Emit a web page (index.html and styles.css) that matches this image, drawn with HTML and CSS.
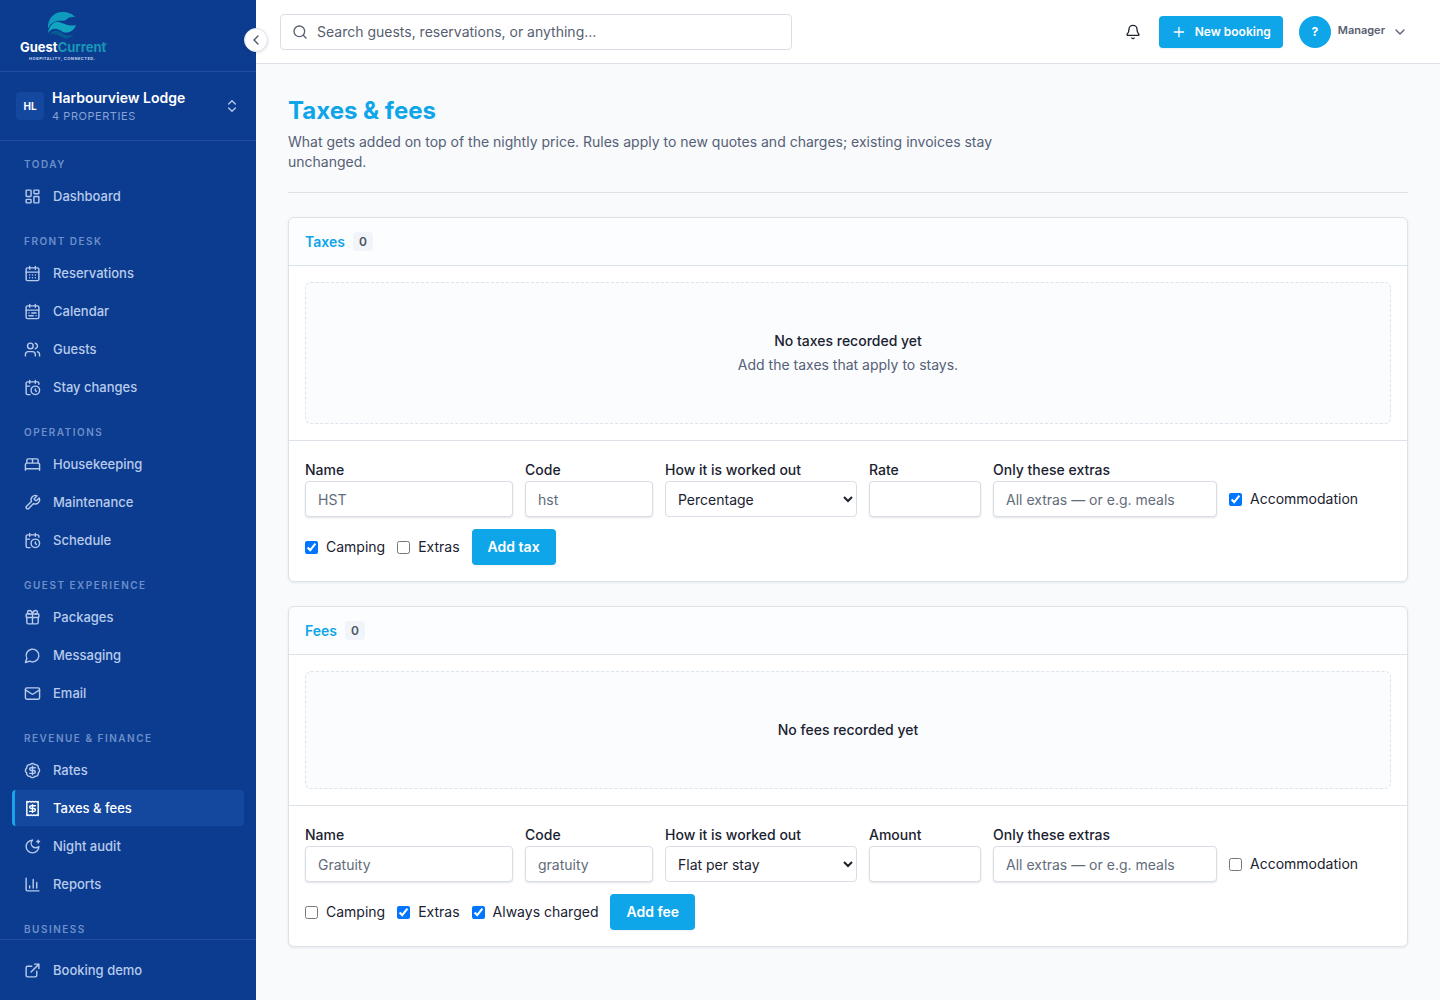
FILE: index.html
```html
<!DOCTYPE html>
<html lang="en">
<head>
<meta charset="utf-8">
<meta name="viewport" content="width=device-width, initial-scale=1">
<title>Taxes &amp; fees · GuestCurrent</title>
<link rel="stylesheet" href="styles.css">
</head>
<body>
<div class="app">
  <aside class="sidebar">
    <a class="brand" href="#" aria-label="GuestCurrent home">
      <svg class="brand-logo" width="96" height="52" viewBox="0 0 96 52">
        <path fill="#0e9bbd" d="M30 19C29 9 36 2 44 2C50 2 55 4 57 7C54 7 51 7 49 9C46 12 42 10 39 11C35 12 32 14 30 19Z"/>
        <path fill="#12a5c0" d="M30 23C31 16 36 11 41 12C46 13 50 17 58 15C56 21 50 24 45 22C40 19 35 16 30 23Z"/>
        <path fill="#0a5a94" d="M32 25C35 19 40 20 44 23C48 26 52 26 56 24C51 30 46 29 42 26C38 24 35 23 32 25Z"/>
        <text class="logo-word" x="2" y="42" fill="#fff">Guest<tspan fill="#1797b5">Current</tspan></text>
        <text class="logo-tm" x="87" y="36">™</text>
        <text class="logo-tag" x="11" y="50">HOSPITALITY, CONNECTED.</text>
      </svg>
    </a>
    <button class="property" type="button">
      <span class="property-badge">HL</span>
      <span class="property-text"><span class="property-name">Harbourview Lodge</span><span class="property-count">4 PROPERTIES</span></span>
      <svg class="icon" width="16" height="16" viewBox="0 0 24 24"><path d="m7 15 5 5 5-5M7 9l5-5 5 5"/></svg>
    </button>
    <nav class="nav" aria-label="Main">
      <section class="nav-group">
        <h2 class="nav-title">TODAY</h2>
        <a class="nav-link" href="#"><svg class="icon" width="17" height="17" viewBox="0 0 24 24"><rect width="7" height="9" x="3" y="3" rx="1"/><rect width="7" height="5" x="14" y="3" rx="1"/><rect width="7" height="9" x="14" y="12" rx="1"/><rect width="7" height="5" x="3" y="16" rx="1"/></svg>Dashboard</a>
      </section>
      <section class="nav-group">
        <h2 class="nav-title">FRONT DESK</h2>
        <a class="nav-link" href="#"><svg class="icon" width="17" height="17" viewBox="0 0 24 24"><path d="M8 2v4M16 2v4M3 10h18M8 14h.01M12 14h.01M16 14h.01M8 18h.01M12 18h.01M16 18h.01"/><rect width="18" height="18" x="3" y="4" rx="2"/></svg>Reservations</a>
        <a class="nav-link" href="#"><svg class="icon" width="17" height="17" viewBox="0 0 24 24"><rect width="18" height="18" x="3" y="4" rx="2"/><path d="M16 2v4M3 10h18M8 2v4M17 14h-6M13 18H7M7 14h.01M17 18h.01"/></svg>Calendar</a>
        <a class="nav-link" href="#"><svg class="icon" width="17" height="17" viewBox="0 0 24 24"><path d="M16 21v-2a4 4 0 0 0-4-4H6a4 4 0 0 0-4 4v2"/><circle cx="9" cy="7" r="4"/><path d="M22 21v-2a4 4 0 0 0-3-3.870M16 3.130a4 4 0 0 1 0 7.750"/></svg>Guests</a>
        <a class="nav-link" href="#"><svg class="icon" width="17" height="17" viewBox="0 0 24 24"><path d="M21 7.500V6a2 2 0 0 0-2-2H5a2 2 0 0 0-2 2v14a2 2 0 0 0 2 2h3.500M16 2v4M8 2v4M3 10h5M17.500 17.500 16 16.300V14"/><circle cx="16" cy="16" r="6"/></svg>Stay changes</a>
      </section>
      <section class="nav-group">
        <h2 class="nav-title">OPERATIONS</h2>
        <a class="nav-link" href="#"><svg class="icon" width="17" height="17" viewBox="0 0 24 24"><path d="M2 20v-8a2 2 0 0 1 2-2h16a2 2 0 0 1 2 2v8M4 10V6a2 2 0 0 1 2-2h12a2 2 0 0 1 2 2v4M12 4v6M2 18h20"/></svg>Housekeeping</a>
        <a class="nav-link" href="#"><svg class="icon" width="17" height="17" viewBox="0 0 24 24"><path d="M14.700 6.300a1 1 0 0 0 0 1.400l1.600 1.600a1 1 0 0 0 1.400 0l3.770-3.770a6 6 0 0 1-7.940 7.940l-6.910 6.910a2.120 2.120 0 0 1-3-3l6.910-6.910a6 6 0 0 1 7.940-7.940l-3.760 3.760z"/></svg>Maintenance</a>
        <a class="nav-link" href="#"><svg class="icon" width="17" height="17" viewBox="0 0 24 24"><path d="M21 7.500V6a2 2 0 0 0-2-2H5a2 2 0 0 0-2 2v14a2 2 0 0 0 2 2h3.500M16 2v4M8 2v4M3 10h5M17.500 17.500 16 16.300V14"/><circle cx="16" cy="16" r="6"/></svg>Schedule</a>
      </section>
      <section class="nav-group">
        <h2 class="nav-title">GUEST EXPERIENCE</h2>
        <a class="nav-link" href="#"><svg class="icon" width="17" height="17" viewBox="0 0 24 24"><rect x="3" y="7" width="18" height="5" rx="1"/><path d="M12 7v14M20 12v7a2 2 0 0 1-2 2H6a2 2 0 0 1-2-2v-7M7.500 7a2.500 2.500 0 0 1 0-5C10 2 11.500 4 12 7c.5-3 2-5 4.500-5a2.500 2.500 0 0 1 0 5"/></svg>Packages</a>
        <a class="nav-link" href="#"><svg class="icon" width="17" height="17" viewBox="0 0 24 24"><path d="M7.900 20A9 9 0 1 0 4 16.100L2 22Z"/></svg>Messaging</a>
        <a class="nav-link" href="#"><svg class="icon" width="17" height="17" viewBox="0 0 24 24"><rect width="20" height="16" x="2" y="4" rx="2"/><path d="m22 7-8.970 5.700a1.940 1.940 0 0 1-2.060 0L2 7"/></svg>Email</a>
      </section>
      <section class="nav-group">
        <h2 class="nav-title">REVENUE &amp; FINANCE</h2>
        <a class="nav-link" href="#"><svg class="icon" width="17" height="17" viewBox="0 0 24 24"><path d="M3.850 8.620a4 4 0 0 1 4.780-4.770 4 4 0 0 1 6.740 0 4 4 0 0 1 4.780 4.780 4 4 0 0 1 0 6.740 4 4 0 0 1-4.770 4.780 4 4 0 0 1-6.750 0 4 4 0 0 1-4.780-4.770 4 4 0 0 1 0-6.760Z"/><path d="M16 8h-6a2 2 0 1 0 0 4h4a2 2 0 1 1 0 4H8M12 18V6"/></svg>Rates</a>
        <a class="nav-link is-active" href="#" aria-current="page"><svg class="icon" width="17" height="17" viewBox="0 0 24 24"><path d="M4 2v20l2-1 2 1 2-1 2 1 2-1 2 1 2-1 2 1V2l-2 1-2-1-2 1-2-1-2 1-2-1-2 1Z"/><path d="M16 8h-6a2 2 0 1 0 0 4h4a2 2 0 1 1 0 4H8M12 17.500v-11"/></svg>Taxes &amp; fees</a>
        <a class="nav-link" href="#"><svg class="icon" width="17" height="17" viewBox="0 0 24 24"><path d="M12 3a6 6 0 0 0 9 9 9 9 0 1 1-9-9M20 3v4M22 5h-4"/></svg>Night audit</a>
        <a class="nav-link" href="#"><svg class="icon" width="17" height="17" viewBox="0 0 24 24"><path d="M3 3v16a2 2 0 0 0 2 2h16M18 17V9M13 17V5M8 17v-3"/></svg>Reports</a>
      </section>
      <section class="nav-group">
        <h2 class="nav-title">BUSINESS</h2>
      </section>
    </nav>
    <div class="sidebar-foot">
      <a class="nav-link" href="#"><svg class="icon" width="17" height="17" viewBox="0 0 24 24"><path d="M15 3h6v6M10 14 21 3M18 13v6a2 2 0 0 1-2 2H5a2 2 0 0 1-2-2V8a2 2 0 0 1 2-2h6"/></svg>Booking demo</a>
    </div>
    <button class="collapse" type="button" aria-label="Collapse sidebar"><svg class="icon" width="16" height="16" viewBox="0 0 24 24"><path d="m15 18-6-6 6-6"/></svg></button>
  </aside>

  <div class="page">
    <header class="topbar">
      <label class="search">
        <svg class="icon" width="16" height="16" viewBox="0 0 24 24"><circle cx="11" cy="11" r="8"/><path d="m21 21-4.300-4.300"/></svg>
        <input class="search-input" type="search" placeholder="Search guests, reservations, or anything..." aria-label="Search">
      </label>
      <div class="topbar-actions">
        <button class="bell" type="button" aria-label="Notifications"><svg class="icon" width="16" height="16" viewBox="0 0 24 24"><path d="M10.270 21a2 2 0 0 0 3.460 0M3.260 15.330A1 1 0 0 0 4 17h16a1 1 0 0 0 .740-1.670C19.410 13.960 18 12.500 18 8A6 6 0 0 0 6 8c0 4.500-1.410 5.960-2.740 7.330"/></svg></button>
        <button class="btn btn-small" type="button"><svg class="icon" width="16" height="16" viewBox="0 0 24 24"><path d="M5 12h14M12 5v14"/></svg>New booking</button>
        <button class="user" type="button"><span class="avatar">?</span><span class="user-role">Manager</span><svg class="icon" width="16" height="16" viewBox="0 0 24 24"><path d="m6 9 6 6 6-6"/></svg></button>
      </div>
    </header>

    <main class="content">
      <header class="page-head">
        <h1 class="page-title">Taxes &amp; fees</h1>
        <p class="page-intro">What gets added on top of the nightly price. Rules apply to new quotes and charges; existing invoices stay unchanged.</p>
      </header>

      <section class="card">
        <header class="card-head"><h2 class="card-title">Taxes</h2><span class="count">0</span></header>
        <div class="card-body">
          <div class="empty"><p class="empty-title">No taxes recorded yet</p><p class="empty-text">Add the taxes that apply to stays.</p></div>
        </div>
        <form class="rule-form">
          <label class="field field-name"><span class="field-label">Name</span><input class="control" type="text" placeholder="HST"></label>
          <label class="field field-code"><span class="field-label">Code</span><input class="control" type="text" placeholder="hst"></label>
          <label class="field field-method"><span class="field-label">How it is worked out</span><select class="control select"><option>Percentage</option><option>Flat per stay</option></select></label>
          <label class="field field-amount"><span class="field-label">Rate</span><input class="control" type="text"></label>
          <label class="field field-extras"><span class="field-label">Only these extras</span><input class="control" type="text" placeholder="All extras — or e.g. meals"></label>
          <label class="check"><input class="check-box" type="checkbox" checked>Accommodation</label>
          <label class="check"><input class="check-box" type="checkbox" checked>Camping</label>
          <label class="check"><input class="check-box" type="checkbox">Extras</label>
          <button class="btn" type="button">Add tax</button>
        </form>
      </section>

      <section class="card">
        <header class="card-head"><h2 class="card-title">Fees</h2><span class="count">0</span></header>
        <div class="card-body">
          <div class="empty"><p class="empty-title">No fees recorded yet</p></div>
        </div>
        <form class="rule-form">
          <label class="field field-name"><span class="field-label">Name</span><input class="control" type="text" placeholder="Gratuity"></label>
          <label class="field field-code"><span class="field-label">Code</span><input class="control" type="text" placeholder="gratuity"></label>
          <label class="field field-method"><span class="field-label">How it is worked out</span><select class="control select"><option>Flat per stay</option><option>Percentage</option></select></label>
          <label class="field field-amount"><span class="field-label">Amount</span><input class="control" type="text"></label>
          <label class="field field-extras"><span class="field-label">Only these extras</span><input class="control" type="text" placeholder="All extras — or e.g. meals"></label>
          <label class="check"><input class="check-box" type="checkbox">Accommodation</label>
          <label class="check"><input class="check-box" type="checkbox">Camping</label>
          <label class="check"><input class="check-box" type="checkbox" checked>Extras</label>
          <label class="check"><input class="check-box" type="checkbox" checked>Always charged</label>
          <button class="btn" type="button">Add fee</button>
        </form>
      </section>
    </main>
  </div>
</div>
</body>
</html>
```
FILE: styles.css
```css
*, *::before, *::after { box-sizing: border-box; }

body {
  margin: 0;
  background: #f8fafc;
  color: #1a2230;
  font-family: Inter, "Liberation Sans", sans-serif;
  font-size: 14px;
  line-height: 20px;
}

h1, h2, p { margin: 0; }
button, input, select { font: inherit; color: inherit; }
button { border: 0; background: none; padding: 0; cursor: pointer; }
a { color: inherit; text-decoration: none; }

.icon {
  flex: none;
  fill: none;
  stroke: currentColor;
  stroke-width: 2;
  stroke-linecap: round;
  stroke-linejoin: round;
}

.app { display: flex; min-height: 100vh; }

/* Sidebar */
.sidebar {
  position: sticky;
  top: 0;
  z-index: 1;
  display: flex;
  flex-direction: column;
  flex: none;
  width: 256px;
  height: 100vh;
  background: #0c3c8f;
  color: #b8cbec;
}
.brand {
  display: flex;
  align-items: center;
  flex: none;
  height: 72px;
  padding: 0 18px;
  border-bottom: 1px solid #2150a3;
}
.logo-word { font-size: 13px; font-weight: 700; }
.logo-tm { font-size: 4px; fill: #1797b5; }
.logo-tag { font-size: 4px; font-weight: 700; letter-spacing: 0.12em; fill: #c5d3ec; }

.property {
  display: flex;
  align-items: center;
  flex: none;
  gap: 8px;
  height: 69px;
  padding: 0 16px;
  border-bottom: 1px solid #2150a3;
  text-align: left;
}
.property-badge {
  width: 28px;
  border-radius: 4px;
  background: #14489e;
  color: #fff;
  font-size: 10px;
  font-weight: 700;
  line-height: 28px;
  text-align: center;
}
.property-text { display: flex; flex: 1; flex-direction: column; }
.property-name { color: #fff; font-weight: 600; }
.property-count { color: #86a3d6; font-size: 11px; line-height: 16px; letter-spacing: 0.05em; }

.nav { flex: 1; min-height: 0; padding: 16px 12px 0; overflow: hidden; }
.nav-group { display: flex; flex-direction: column; gap: 2px; margin-bottom: 20px; }
.nav-title {
  padding: 0 12px 4px;
  color: #6d8fcb;
  font-size: 10px;
  font-weight: 600;
  line-height: 15px;
  letter-spacing: 0.15em;
}
.nav-link {
  display: flex;
  align-items: center;
  gap: 12px;
  height: 36px;
  padding: 0 12px;
  border-radius: 4px;
  font-size: 13px;
  font-weight: 500;
}
.nav-link.is-active {
  padding-left: 9px;
  border-left: 3px solid #1aa3e8;
  background: #14489e;
  color: #fff;
}
.sidebar-foot { flex: none; padding: 12px; border-top: 1px solid #2150a3; }

.collapse {
  position: absolute;
  top: 28px;
  right: -12px;
  display: flex;
  align-items: center;
  justify-content: center;
  width: 24px;
  height: 24px;
  border: 1px solid #dde2ea;
  border-radius: 50%;
  background: #fff;
  color: #4b5563;
  box-shadow: 0 1px 3px rgba(15, 23, 42, 0.12);
}

/* Top bar */
.page { flex: 1; min-width: 0; }
.topbar {
  display: flex;
  align-items: center;
  justify-content: space-between;
  height: 64px;
  padding: 0 32px 0 24px;
  border-bottom: 1px solid #dde1e8;
  background: #fff;
}
.search {
  display: flex;
  align-items: center;
  gap: 9px;
  width: 512px;
  height: 36px;
  padding: 0 11px;
  border: 1px solid #d9dee6;
  border-radius: 4px;
  color: #566070;
}
.search-input { flex: 1; min-width: 0; padding: 0; border: 0; outline: 0; background: none; }
.search-input::placeholder { color: #566070; opacity: 1; }
.topbar-actions { display: flex; align-items: center; gap: 16px; }
.bell { display: flex; padding: 2px; }
.user { display: flex; align-items: center; gap: 7px; color: #566070; }
.avatar {
  width: 32px;
  border-radius: 50%;
  background: #0ea5e9;
  color: #fff;
  font-size: 12px;
  font-weight: 700;
  line-height: 32px;
}
.user-role { padding-bottom: 3px; font-size: 11px; font-weight: 600; }

.btn {
  display: flex;
  align-items: center;
  gap: 8px;
  height: 36px;
  padding: 0 16px;
  border-radius: 4px;
  background: #0ea5e9;
  color: #fff;
  font-weight: 600;
  box-shadow: 0 1px 2px rgba(15, 23, 42, 0.06);
}
.btn-small { height: 32px; padding: 0 12px; font-size: 12px; }

/* Page content */
.content { padding: 31px 32px 32px; }
.page-head { padding-bottom: 20px; border-bottom: 1px solid #dde1e8; }
.page-title { margin-bottom: 5px; color: #0ea5e9; font-size: 24px; font-weight: 700; line-height: 32px; }
.page-intro { max-width: 720px; color: #566076; }

.card {
  margin-top: 24px;
  border: 1px solid #dde1e8;
  border-radius: 6px;
  background: #fff;
  box-shadow: 0 1px 3px rgba(15, 23, 42, 0.08);
}
.card-head {
  display: flex;
  align-items: center;
  gap: 8px;
  height: 48px;
  padding: 0 16px;
  border-bottom: 1px solid #dde1e8;
  border-radius: 6px 6px 0 0;
  background: #fcfdfe;
}
.card-title { color: #0ea5e9; font-size: 14px; font-weight: 600; }
.count {
  padding: 0 6px;
  border-radius: 4px;
  background: #f1f4f8;
  color: #4b5563;
  font-size: 12px;
  font-weight: 600;
  line-height: 19px;
}
.card-body { padding: 16px; }
.empty {
  display: flex;
  flex-direction: column;
  gap: 4px;
  padding: 48px 16px;
  border: 1px dashed #dbe3ec;
  border-radius: 6px;
  background: #fbfcfe;
  text-align: center;
}
.empty-title { font-weight: 500; }
.empty-text { color: #566076; }

.rule-form {
  display: flex;
  flex-wrap: wrap;
  align-items: flex-end;
  gap: 12px;
  padding: 16px;
  border-top: 1px solid #dde1e8;
}
.field { display: flex; flex-direction: column; }
.field-name { width: 208px; }
.field-code { width: 128px; }
.field-method { width: 192px; }
.field-amount { width: 112px; }
.field-extras { width: 224px; }
.field-label { padding-top: 2px; font-weight: 500; line-height: 22px; }
.control {
  width: 100%;
  height: 36px;
  padding: 0 12px;
  border: 1px solid #d9dee6;
  border-radius: 4px;
  background: #fff;
  box-shadow: 0 1px 2px rgba(15, 23, 42, 0.12);
}
.control::placeholder { color: #626c7a; opacity: 1; }
.select { padding: 0 0 0 8px; box-shadow: none; }
.check { display: flex; align-items: center; gap: 8px; height: 36px; }
.check-box { width: 13px; height: 13px; margin: 0; }
```
